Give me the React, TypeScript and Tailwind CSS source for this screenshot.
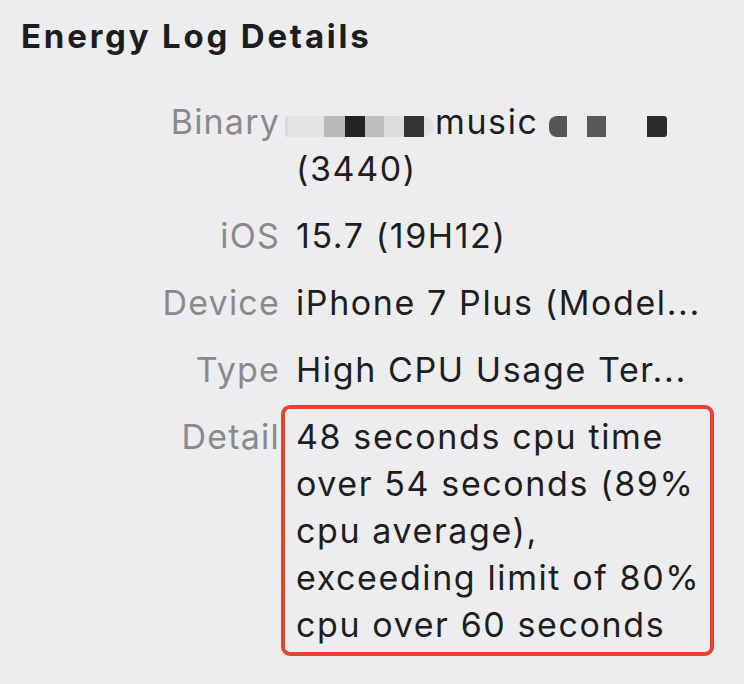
import React from "react";

function Mosaic() {
  return (
    <span className="inline-flex items-center align-[-3px] ml-[-11px] mr-[1px]">
      <span className="inline-block w-[3px] h-[21px] bg-[#d8d8da] rounded-l-full" />
      <span className="inline-block w-[36px] h-[21px] bg-[#e4e4e6]" />
      <span className="inline-block w-[21px] h-[21px] bg-[#b9b9bb]" />
      <span className="inline-block w-[20px] h-[21px] bg-[#232325]" />
      <span className="inline-block w-[19px] h-[21px] bg-[#bdbdbf]" />
      <span className="inline-block w-[20px] h-[21px] bg-[#dcdcde]" />
      <span className="inline-block w-[20px] h-[21px] bg-[#333335]" />
      <span className="inline-block w-[10px] h-[21px] bg-[#e2e2e4] rounded-r-full" />
    </span>
  );
}

function Mosaic2() {
  return (
    <span className="inline-flex items-center align-[-3px] ml-[10px]">
      <span className="inline-block w-[18px] h-[21px] bg-[#555557] rounded-l-[8px]" />
      <span className="inline-block w-[20px] h-[21px]" />
      <span className="inline-block w-[19px] h-[21px] bg-[#58585a]" />
      <span className="inline-block w-[41px] h-[21px]" />
      <span className="inline-block w-[20px] h-[21px] bg-[#2b2b2d] rounded-r-[3px]" />
    </span>
  );
}

function Row({ label, children, boxed }: { label: string; children: React.ReactNode; boxed?: boolean }) {
  return (
    <div className="flex">
      <div className="w-[281px] shrink-0 text-right text-[#8a8a8d] pt-[8px] tracking-[1.2px] pr-[1px]">{label}</div>
      <div
        className={
          "border-4 rounded-[9px] py-[4px] pl-[11px] pr-[10px] tracking-[1.6px] " +
          (boxed ? "border-[#e5432d]" : "border-transparent")
        }
      >
        {children}
      </div>
    </div>
  );
}

export default function App() {
  return (
    <div
      className="w-[744px] h-[684px] bg-[#ededef] overflow-hidden text-[#1e1e20]"
      style={{ fontFamily: "Inter, 'Noto Sans', sans-serif" }}
    >
      <h1 className="pl-[21px] pt-[18px] text-[33px] leading-[36px] font-bold tracking-[2.8px] text-[#1d1d1f]">
        Energy Log Details
      </h1>
      <div className="mt-[36px] flex flex-col gap-[4px] text-[34px] leading-[47px]">
        <Row label="Binary">
          <div className="whitespace-nowrap">
            <Mosaic />
            music
            <Mosaic2 />
          </div>
          <div>(3440)</div>
        </Row>
        <Row label="iOS">
          <div className="whitespace-nowrap">15.7 (19H12)</div>
        </Row>
        <Row label="Device">
          <div className="whitespace-nowrap">iPhone 7 Plus (Model...</div>
        </Row>
        <Row label="Type">
          <div className="whitespace-nowrap">High CPU Usage Ter...</div>
        </Row>
        <Row label="Detail" boxed>
          <div className="whitespace-nowrap">48 seconds cpu time</div>
          <div className="whitespace-nowrap">over 54 seconds (89%</div>
          <div className="whitespace-nowrap">cpu average),</div>
          <div className="whitespace-nowrap">exceeding limit of 80%</div>
          <div className="whitespace-nowrap">cpu over 60 seconds</div>
        </Row>
      </div>
    </div>
  );
}
